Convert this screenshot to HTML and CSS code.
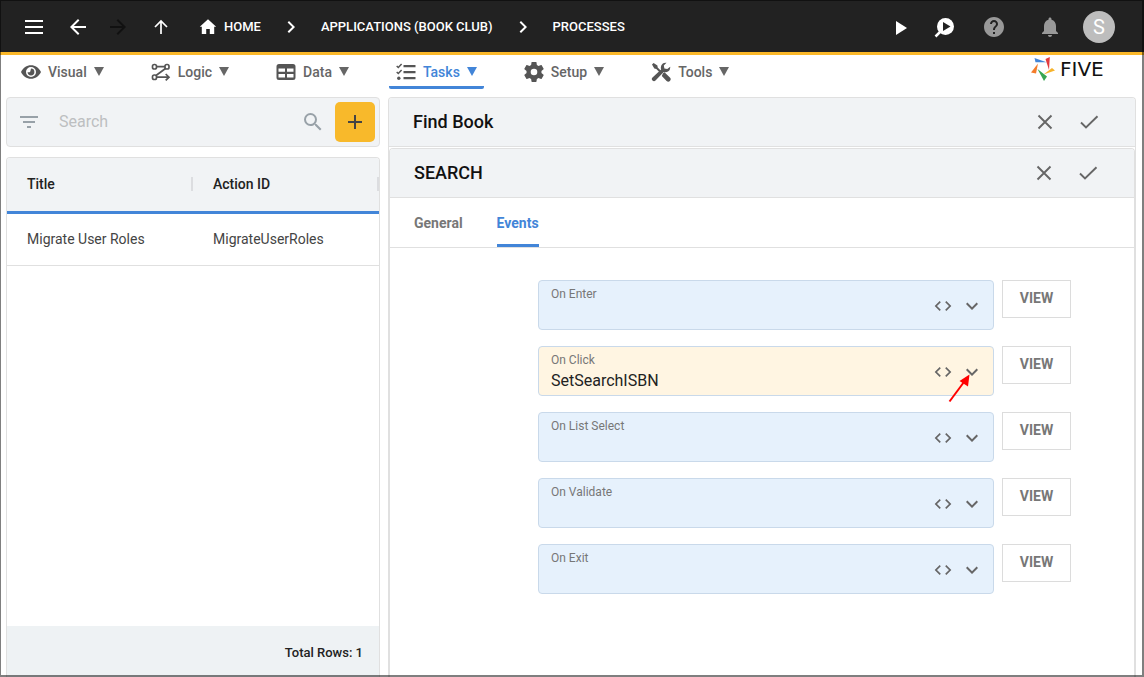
FILE: index.html
```html
<!DOCTYPE html>
<html lang="en">
<head>
<meta charset="utf-8">
<meta name="viewport" content="width=device-width, initial-scale=1">
<title>Five - Processes</title>
<link rel="stylesheet" href="styles.css">
</head>
<body>
<svg class="defs" aria-hidden="true">
  <symbol id="i-chevron" viewBox="0 0 24 24"><path d="M10 6 8.600 7.400 13.200 12l-4.600 4.600L10 18l6-6z"/></symbol>
  <symbol id="i-close" viewBox="0 0 24 24"><path d="M5.500 5.500l13 13M18.500 5.500l-13 13" fill="none" stroke="currentColor" stroke-width="1.900"/></symbol>
  <symbol id="i-check" viewBox="0 0 24 24"><path d="M4 12.500l5 5L20.500 6.200" fill="none" stroke="currentColor" stroke-width="1.900"/></symbol>
  <symbol id="i-code" viewBox="0 0 24 24"><path d="M9.400 16.600 4.800 12l4.600-4.600L8 6l-6 6 6 6zm5.200 0 4.600-4.600-4.600-4.600L16 6l6 6-6 6z"/></symbol>
  <symbol id="i-expand" viewBox="0 0 24 24"><path d="M16.600 8.600 12 13.200 7.400 8.600 6 10l6 6 6-6z"/></symbol>
  <symbol id="i-caret" viewBox="0 0 10 9"><path d="M0 0h10L5 9z"/></symbol>
</svg>

<header class="topbar">
  <button class="icon-btn menu" aria-label="Menu"><svg class="icon" viewBox="0 0 24 24"><path d="M3 5h18v2H3zM3 11h18v2H3zM3 17h18v2H3z"/></svg></button>
  <button class="icon-btn" aria-label="Back"><svg class="icon" viewBox="0 0 24 24"><path d="M20 11H7.800l5.600-5.600L12 4l-8 8 8 8 1.400-1.400L7.800 13H20z"/></svg></button>
  <button class="icon-btn forward" aria-label="Forward" disabled><svg class="icon" viewBox="0 0 24 24"><path d="M4 11h12.200l-5.600-5.600L12 4l8 8-8 8-1.400-1.400 5.600-5.600H4z"/></svg></button>
  <button class="icon-btn up" aria-label="Up"><svg class="icon" viewBox="0 0 24 24"><path d="M12 19V6.500M6 12l6-6 6 6" fill="none" stroke="currentColor" stroke-width="1.700"/></svg></button>
  <nav class="crumbs" aria-label="Breadcrumb">
    <a class="crumb" href="#"><svg class="icon" viewBox="0 0 24 24"><path d="M10.200 19v-5h3.600v5h4.400v-7.200h2L12 4.300l-8.200 7.500h2V19z"/></svg>HOME</a>
    <svg class="icon"><use href="#i-chevron"/></svg>
    <a class="crumb" href="#">APPLICATIONS (BOOK CLUB)</a>
    <svg class="icon"><use href="#i-chevron"/></svg>
    <a class="crumb" href="#">PROCESSES</a>
  </nav>
  <div class="actions">
    <button class="small-btn" aria-label="Run"><svg class="icon" viewBox="0 0 24 24"><path d="M8 6v14l11-7z"/></svg></button>
    <button class="small-btn inspect" aria-label="Inspect"><svg class="icon" viewBox="0 0 24 24"><circle cx="13.500" cy="11.500" r="8.500"/><path d="M9 16l-5.500 5.500" stroke="currentColor" stroke-width="2.500"/><path class="cut" d="M11 7v9l7.500-4.500z"/></svg></button>
    <button class="small-btn help" aria-label="Help"><svg class="icon" viewBox="0 0 24 24"><path d="M12 2C6.480 2 2 6.480 2 12s4.480 10 10 10 10-4.480 10-10S17.520 2 12 2zm1 17h-2v-2h2zm2.070-7.750-.9.920C13.450 12.900 13 13.500 13 15h-2v-.5c0-1.100.45-2.100 1.170-2.830l1.240-1.260c.37-.36.59-.86.59-1.410 0-1.100-.9-2-2-2s-2 .9-2 2H8c0-2.210 1.790-4 4-4s4 1.790 4 4c0 .88-.36 1.680-.93 2.250z"/></svg></button>
    <button class="small-btn bell" aria-label="Notifications"><svg class="icon" viewBox="0 0 24 24"><path d="M12 22c1.100 0 2-.9 2-2h-4c0 1.100.89 2 2 2zm6-6v-5c0-3.070-1.640-5.640-4.500-6.320V4c0-.83-.67-1.500-1.500-1.500s-1.500.67-1.500 1.500v.68C7.630 5.360 6 7.920 6 11v5l-2 2v1h16v-1z"/></svg></button>
    <button class="avatar" aria-label="Account">S</button>
  </div>
</header>

<nav class="menubar" aria-label="Sections">
  <a class="tab" href="#"><svg class="tab-icon" viewBox="0 0 20 20"><path fill-rule="evenodd" d="M0 10C2 5.800 5.700 3.200 10 3.200S18 5.800 20 10c-2 4.200-5.700 6.800-10 6.800S2 14.200 0 10zm10-5a5 5 0 1 0 0 10 5 5 0 0 0 0-10z"/><path d="M10 6.600a3.400 3.400 0 1 1-3.400 3.400c.9.600 2.200.3 2.700-.6.500-.9.400-2 .7-2.800z"/></svg>Visual<svg class="caret"><use href="#i-caret"/></svg></a>
  <a class="tab" href="#"><svg class="tab-icon" viewBox="0 0 20 20"><g fill="none" stroke="currentColor" stroke-width="1.700"><rect x="1.500" y="2.500" width="4" height="4.500" rx="1.800"/><rect x="14" y="2.500" width="4" height="4.500" rx="1.800"/><rect x="1.500" y="13" width="4" height="4.500" rx="1.800"/><path d="M5.500 4.700H14M14.500 6.500l-9.500 7M5.500 15.200h12M14.700 12l3.300 3.200-3.300 3.200"/></g></svg>Logic<svg class="caret"><use href="#i-caret"/></svg></a>
  <a class="tab" href="#"><svg class="tab-icon" viewBox="0 0 20 20"><path fill-rule="evenodd" d="M3 2h14a2.500 2.500 0 0 1 2.500 2.500v11A2.500 2.500 0 0 1 17 18H3a2.500 2.500 0 0 1-2.500-2.500v-11A2.500 2.500 0 0 1 3 2zM2.500 6.500v3.300H9V6.500zM11 6.500v3.300h6.500V6.500zM2.500 12v3.500H9V12zM11 12v3.500h6.500V12z"/></svg>Data<svg class="caret"><use href="#i-caret"/></svg></a>
  <a class="tab active" href="#" aria-current="page"><svg class="tab-icon" viewBox="0 0 20 20"><path d="M7.500 3h12v2.200h-12zM7.500 9h12v2.200h-12zM7.500 15h12v2.200h-12z"/><path d="M.7 4l1.600 1.500L5.600 2M.7 10l1.600 1.500L5.600 8" fill="none" stroke="currentColor" stroke-width="1.500"/><circle cx="2.800" cy="16.200" r="1.700"/></svg>Tasks<svg class="caret"><use href="#i-caret"/></svg></a>
  <a class="tab" href="#"><svg class="tab-icon" viewBox="2 2 20 20"><path d="M19.430 12.980c.04-.32.070-.64.070-.98s-.03-.66-.07-.98l2.110-1.650c.19-.15.24-.42.120-.64l-2-3.460c-.12-.22-.39-.3-.61-.22l-2.490 1c-.52-.4-1.080-.73-1.690-.98l-.38-2.650C14.460 2.180 14.250 2 14 2h-4c-.25 0-.46.180-.49.420l-.38 2.650c-.61.250-1.170.590-1.690.980l-2.490-1c-.23-.09-.49 0-.61.220l-2 3.460c-.13.220-.07.490.120.640l2.110 1.650c-.04.320-.07.650-.07.980s.03.660.070.980l-2.110 1.650c-.19.150-.24.420-.12.640l2 3.460c.12.220.39.300.61.220l2.490-1c.52.400 1.080.730 1.690.980l.38 2.650c.03.240.24.420.49.420h4c.25 0 .46-.18.490-.42l.38-2.650c.61-.25 1.170-.59 1.690-.98l2.490 1c.23.090.49 0 .61-.22l2-3.460c.12-.22.070-.49-.12-.64zM12 15.300a3.300 3.300 0 1 1 0-6.600 3.300 3.300 0 0 1 0 6.600z"/></svg>Setup<svg class="caret"><use href="#i-caret"/></svg></a>
  <a class="tab" href="#"><svg class="tab-icon" viewBox="0 0 20 20"><path d="M1 2.600 2.600 1l3.800 2.500.3 2.100 3.200 3.200-1.400 1.400-3.200-3.200-2-.4z"/><path d="M12 11.300l1.500-1 5.400 5.300a2.300 2.300 0 0 1-3.300 3.300l-4.800-5z"/><path d="M19.200 4.800a5 5 0 0 1-6.500 5.300L4.500 18.600a2.100 2.100 0 0 1-3-3l8.600-8.200A5 5 0 0 1 15.500.8l-2.700 2.800.6 2.900 2.900.6z"/></svg>Tools<svg class="caret"><use href="#i-caret"/></svg></a>
  <a class="brand" href="#"><svg class="brand-mark" viewBox="0 0 24 24"><path fill="#4285d8" d="M3.500 1l12 4.200H4.500z"/><path fill="#e23b3f" d="M18.800 0 18 13 14.500 2z"/><path fill="#f7b32b" d="M24 13.500 12.500 17.500 21 11z"/><path fill="#37a651" d="M13 24l-6.500-12L16 19.500z"/><path fill="#f47c2b" d="M0 15.500 7 6.500 5 16.500z"/></svg><span class="brand-name">FIVE</span></a>
</nav>

<main class="workspace">
  <aside class="sidebar">
    <form class="search" role="search">
      <button type="button" class="small-btn" aria-label="Filter"><svg class="icon" viewBox="0 0 24 24"><path d="M10 18h4v-2h-4zM3 6v2h18V6zM6 13h12v-2H6z"/></svg></button>
      <input class="search-input" type="search" placeholder="Search" aria-label="Search">
      <button type="button" class="small-btn" aria-label="Find"><svg class="icon" viewBox="0 0 24 24"><path d="M15.500 14h-.79l-.28-.27A6.470 6.470 0 0 0 16 9.500 6.500 6.500 0 1 0 9.500 16c1.610 0 3.090-.59 4.230-1.570l.27.280v.790l5 4.990L20.490 19zm-6 0C7.010 14 5 11.990 5 9.500S7.010 5 9.500 5 14 7.010 14 9.500 11.990 14 9.500 14z"/></svg></button>
      <button type="button" class="add" aria-label="Add"><svg class="icon" viewBox="0 0 24 24"><path d="M19 13h-6v6h-2v-6H5v-2h6V5h2v6h6z"/></svg></button>
    </form>
    <section class="list">
      <table class="records">
        <thead><tr><th scope="col"><span class="th-label">Title</span></th><th scope="col"><span class="th-label">Action ID</span></th></tr></thead>
        <tbody><tr><td>Migrate User Roles</td><td>MigrateUserRoles</td></tr></tbody>
      </table>
      <footer class="total">Total Rows: 1</footer>
    </section>
  </aside>

  <section class="panel">
    <header class="panel-head">
      <h1 class="panel-title">Find Book</h1>
      <button class="small-btn" aria-label="Cancel process"><svg class="icon"><use href="#i-close"/></svg></button>
      <button class="small-btn" aria-label="Save process"><svg class="icon"><use href="#i-check"/></svg></button>
    </header>
    <section class="panel inner">
      <header class="panel-head">
        <h2 class="panel-title">SEARCH</h2>
        <button class="small-btn" aria-label="Cancel field"><svg class="icon"><use href="#i-close"/></svg></button>
        <button class="small-btn" aria-label="Save field"><svg class="icon"><use href="#i-check"/></svg></button>
      </header>
      <nav class="subtabs" aria-label="Field settings">
        <a class="subtab" href="#">General</a>
        <a class="subtab current" href="#" aria-current="page">Events</a>
      </nav>
      <form class="events">
        <div class="event">
          <div class="field"><div class="field-main"><label for="enter">On Enter</label><input id="enter" type="text"></div><button type="button" class="glyph-btn" aria-label="Edit code"><svg class="code"><use href="#i-code"/></svg></button><button type="button" class="glyph-btn" aria-label="Open list"><svg class="icon"><use href="#i-expand"/></svg></button></div>
          <button type="button" class="view">VIEW</button>
        </div>
        <div class="event">
          <div class="field filled"><div class="field-main"><label for="click">On Click</label><input id="click" type="text" value="SetSearchISBN"></div><button type="button" class="glyph-btn" aria-label="Edit code"><svg class="code"><use href="#i-code"/></svg></button><button type="button" class="glyph-btn" aria-label="Open list"><svg class="icon"><use href="#i-expand"/></svg></button>
            <svg class="pointer" viewBox="0 0 24 30" aria-hidden="true"><path d="M1.500 28.500 16 9" stroke="#f00" stroke-width="2"/><path d="M21.500 1.500 11.500 8l8.500 5.500z" fill="#f00"/></svg></div>
          <button type="button" class="view">VIEW</button>
        </div>
        <div class="event">
          <div class="field"><div class="field-main"><label for="select">On List Select</label><input id="select" type="text"></div><button type="button" class="glyph-btn" aria-label="Edit code"><svg class="code"><use href="#i-code"/></svg></button><button type="button" class="glyph-btn" aria-label="Open list"><svg class="icon"><use href="#i-expand"/></svg></button></div>
          <button type="button" class="view">VIEW</button>
        </div>
        <div class="event">
          <div class="field"><div class="field-main"><label for="validate">On Validate</label><input id="validate" type="text"></div><button type="button" class="glyph-btn" aria-label="Edit code"><svg class="code"><use href="#i-code"/></svg></button><button type="button" class="glyph-btn" aria-label="Open list"><svg class="icon"><use href="#i-expand"/></svg></button></div>
          <button type="button" class="view">VIEW</button>
        </div>
        <div class="event">
          <div class="field"><div class="field-main"><label for="exit">On Exit</label><input id="exit" type="text"></div><button type="button" class="glyph-btn" aria-label="Edit code"><svg class="code"><use href="#i-code"/></svg></button><button type="button" class="glyph-btn" aria-label="Open list"><svg class="icon"><use href="#i-expand"/></svg></button></div>
          <button type="button" class="view">VIEW</button>
        </div>
      </form>
    </section>
  </section>
</main>
</body>
</html>
```
FILE: styles.css
```css
* { box-sizing: border-box; }

body {
  display: flex;
  flex-direction: column;
  min-height: 100vh;
  margin: 0;
  background: #fff;
  color: #222;
  font: 14px/20px Roboto, "Liberation Sans", sans-serif;
}

/* window frame drawn over the page edges */
body::after {
  content: "";
  position: fixed;
  inset: 0;
  border: solid rgba(0, 0, 0, .5);
  border-width: 1px 2px 2px 1px;
  pointer-events: none;
}

a { color: inherit; text-decoration: none; }
button { padding: 0; border: 0; background: none; color: inherit; font: inherit; cursor: pointer; }
svg { display: block; flex: none; fill: currentColor; }
.defs { position: absolute; width: 0; height: 0; }
.icon { width: 24px; height: 24px; }

/* top bar */
.topbar {
  display: flex;
  align-items: center;
  height: 55px;
  padding: 2px 29px 0 14px;
  border-bottom: 3px solid #fbb829;
  background: #222;
  color: #fff;
}
.icon-btn { display: grid; place-items: center; width: 40px; height: 40px; }
.menu { margin-right: 4px; }
.forward { color: #111; }
.up { margin-left: 3px; }
.crumbs { display: flex; align-items: center; gap: 18px; margin-left: 15px; font-size: 13px; font-weight: 500; white-space: nowrap; }
.crumb { display: flex; align-items: center; gap: 4px; }
.actions { display: flex; align-items: center; margin-left: auto; }
.small-btn { display: grid; place-items: center; width: 24px; height: 24px; }
.inspect { margin-left: 20px; }
.cut { fill: #222; }
.help { margin-left: 26px; color: #999; }
.bell { margin-left: 32px; color: #999; }
.avatar { width: 32px; height: 32px; margin-left: 21px; border-radius: 50%; background: #bdbdbd; color: #fff; font-size: 20px; }

/* section menu */
.menubar { display: flex; gap: 33px; height: 42px; padding: 0 26px 0 14px; color: #666; font-weight: 500; }
.tab { display: flex; align-items: center; height: 34px; padding: 2px 7px 0; border-bottom: 3px solid transparent; border-radius: 2px; }
.tab-icon { width: 20px; height: 20px; margin-right: 7px; color: #555; }
.caret { width: 10px; height: 9px; margin-left: 7px; }
.tab.active { border-color: #4285d8; color: #4285d8; }
.brand { display: flex; align-items: center; gap: 5px; height: 28px; margin-left: auto; color: #111; font: 20px/20px "DejaVu Sans", sans-serif; }
.brand-mark { width: 24px; height: 24px; }
.brand-name { min-width: 58px; }

/* workspace */
.workspace { display: grid; flex: 1; grid-template-columns: 1fr 2fr; gap: 8px; padding: 0 8px 0 6px; }
.sidebar { display: flex; flex-direction: column; gap: 10px; min-width: 0; }
.search {
  display: flex;
  align-items: center;
  height: 50px;
  padding: 0 4px 0 10px;
  border: 1px solid #e0e0e0;
  border-radius: 4px;
  background: #f1f3f5;
  color: #98a1a8;
}
.search-input { flex: 1; min-width: 0; margin: 0 0 0 18px; padding: 0; border: 0; outline: 0; background: none; font: inherit; font-size: 16px; }
.search-input::placeholder { color: #bdbfc1; }
.add { display: grid; place-items: center; width: 40px; height: 40px; margin-left: 10px; border-radius: 5px; background: #f8b92b; color: #444; }

.list { display: flex; flex: 1; flex-direction: column; border: 1px solid #e0e0e0; border-bottom: 0; border-radius: 4px 4px 0 0; overflow: hidden; }
.records { width: 100%; border-collapse: separate; border-spacing: 0; table-layout: fixed; text-align: left; }
.records th { height: 56px; padding: 0 0 2px 20px; border-bottom: 3px solid #4285d8; background: #f1f3f5; font-weight: 500; }
.th-label { display: block; height: 14px; border-right: 2px solid #dcdde0; line-height: 14px; }
.records td { height: 52px; padding: 0 0 2px 20px; border-bottom: 1px solid #e0e0e0; color: #444; }
.total { height: 51px; margin-top: auto; padding: 17px 16px 14px; background: #eef2f4; font-size: 13px; font-weight: 500; text-align: right; }

.panel { display: flex; flex-direction: column; min-width: 0; border: 1px solid #e0e0e0; border-bottom: 0; border-radius: 4px 4px 0 0; }
.inner { flex: 1; margin-top: 1px; }
.panel-head { display: flex; align-items: center; gap: 20px; height: 49px; padding: 0 34px 0 24px; border-bottom: 1px solid #e0e0e0; border-radius: 3px 3px 0 0; background: #f1f3f5; color: #666; }
.panel-title { flex: 1; margin: 0; color: #111; font-size: 18px; font-weight: 500; line-height: 24px; }
.subtabs { display: flex; gap: 34px; height: 50px; padding: 0 24px; border-bottom: 1px solid #e0e0e0; color: #777; font-weight: 700; }
.subtab { padding: 15px 0 11px; border-bottom: 3px solid transparent; border-radius: 2px 2px 0 0; }
.subtab.current { border-color: #4285d8; color: #4285d8; }

.events { display: grid; gap: 16px; padding: 32px 63px 32px 148px; }
.event { display: flex; align-items: flex-start; gap: 8px; }
.field {
  position: relative;
  display: flex;
  flex: 1;
  align-items: center;
  min-width: 0;
  height: 50px;
  padding: 0 9px 0 12px;
  border: 1px solid #c9d9ea;
  border-radius: 4px;
  background: #e6f1fc;
  color: #666;
}
.filled { background: #fff5e2; }
.field-main { display: flex; flex: 1; flex-direction: column; min-width: 0; padding-top: 2px; }
.field label { color: #777; font-size: 12px; line-height: 16px; }
.field input { width: 100%; height: 24px; padding: 0; border: 0; outline: 0; background: none; color: #222; font: inherit; font-size: 16px; }
.glyph-btn { display: grid; place-items: center; height: 24px; margin: 2px 0 0 7px; }
.code { width: 20px; height: 20px; }
.pointer { position: absolute; right: 21px; bottom: -8px; width: 24px; height: 30px; }
.view { width: 69px; height: 38px; padding: 0 0 2px; border: 1px solid #dcdcdc; background: #fff; color: #777; font-weight: 700; }
```
